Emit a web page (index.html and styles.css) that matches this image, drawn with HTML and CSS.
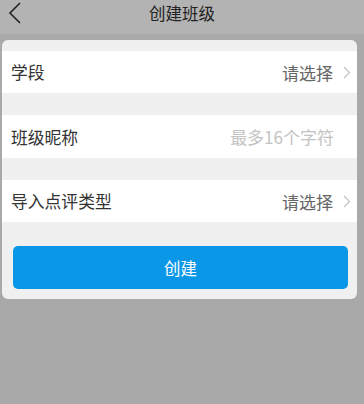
FILE: index.html
```html
<!DOCTYPE html>
<html lang="zh-CN">
<head>
    <meta charset="UTF-8">
    <meta name="viewport" content="width=device-width, initial-scale=1.0">
    <title>创建班级</title>
    <link rel="stylesheet" href="styles.css">
</head>
<body>
    <div class="header">
        <span class="back">
            <svg width="14" height="22" viewBox="0 0 14 22">
                <path d="M12 1 L2 11 L12 21" fill="none" stroke="#222" stroke-width="1.6"/>
            </svg>
        </span>
        <div class="title">创建班级</div>
    </div>

    <div class="card">
        <div class="row">
            <span class="label">学段</span>
            <span class="value">请选择</span>
            <span class="arrow">
                <svg width="8" height="13" viewBox="0 0 8 13">
                    <path d="M1 1 L6.5 6.5 L1 12" fill="none" stroke="#c4c4c4" stroke-width="1.3"/>
                </svg>
            </span>
        </div>
        <div class="row">
            <span class="label">班级昵称</span>
            <span class="placeholder">最多16个字符</span>
        </div>
        <div class="row">
            <span class="label">导入点评类型</span>
            <span class="value">请选择</span>
            <span class="arrow">
                <svg width="8" height="13" viewBox="0 0 8 13">
                    <path d="M1 1 L6.5 6.5 L1 12" fill="none" stroke="#c4c4c4" stroke-width="1.3"/>
                </svg>
            </span>
        </div>
        <button class="create-btn">创建</button>
    </div>
</body>
</html>
```

FILE: styles.css
```css
* {
    margin: 0;
    padding: 0;
    box-sizing: border-box;
}

body {
    font-family: "Noto Sans CJK SC", "Noto Sans", sans-serif;
    background: #a9a9a9;
    width: 364px;
    height: 404px;
    overflow: hidden;
}

.header {
    height: 34px;
    background: #b3b3b3;
    display: flex;
    align-items: center;
    justify-content: center;
    position: relative;
}

.back {
    position: absolute;
    left: 8px;
    top: 2px;
}

.title {
    font-size: 16.5px;
    color: #222;
    line-height: 26px;
    margin-top: -9px;
}

.card {
    margin: 6px 0 0 2px;
    width: 355px;
    background: #f0f0f0;
    border-radius: 6px;
    padding: 11px 0 10px;
    display: flex;
    flex-direction: column;
}

.row {
    height: 42px;
    background: #fff;
    display: flex;
    align-items: center;
    padding: 0 6px 0 9px;
    margin-bottom: 22px;
}

.row:nth-child(2) {
    height: 43px;
}

.row:nth-child(3) {
    margin-bottom: 24px;
}

.label {
    flex: 1;
    font-size: 16.8px;
    color: #333;
}

.value {
    font-size: 17px;
    color: #666;
}

.placeholder {
    font-size: 17px;
    color: #c3c3c3;
    margin-right: 17px;
}

.arrow {
    display: flex;
    margin-left: 10px;
    margin-top: 1px;
}

.create-btn {
    margin: 0 9px 0 11px;
    height: 43px;
    border: none;
    border-radius: 5px;
    background: #0a97e8;
    color: #fff;
    font-family: inherit;
    font-size: 16.5px;
}
```
